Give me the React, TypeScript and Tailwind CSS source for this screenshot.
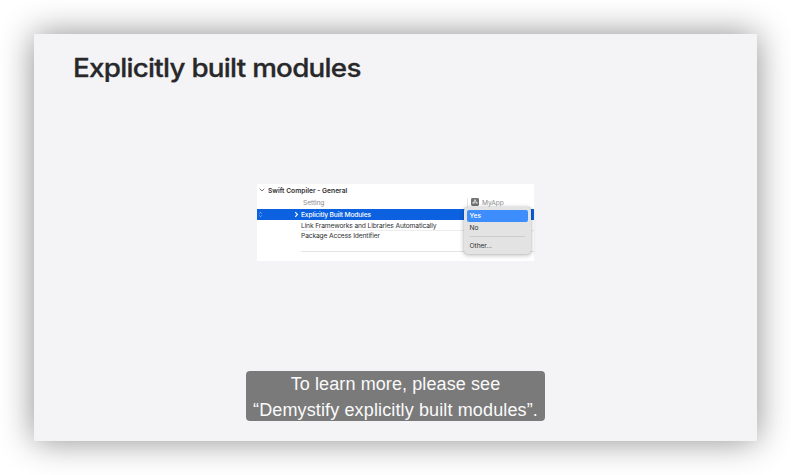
import React from "react";

function BuildSettings() {
  return (
    <div className="relative ml-[223px] mt-[91px] h-[77px] w-[277px] bg-white font-['Inter','Noto_Sans',sans-serif] text-[6.7px] leading-[11px] tracking-[-0.14px] text-[#303033]">
      <div className="flex h-[13px] items-center pl-[2px] font-semibold">
        <svg className="mb-[1px] mr-[3px] h-[6px] w-[6px]" viewBox="0 0 6 6" fill="none" stroke="#505053" strokeWidth=".8">
          <path d="M.7 1.7 3 4 5.3 1.7" />
        </svg>
        <span className="whitespace-nowrap pt-[1px] tracking-[0.01px]">Swift Compiler - General</span>
      </div>
      <div className="flex h-[12px] items-center text-[#8d8d90]">
        <span className="w-[164px] pl-[46px] leading-[10px] tracking-[-0.1px]">Setting</span>
        <span className="ml-[46px] flex h-[10px] items-center gap-[3px] border-l border-[#e4e4e4] pl-[3px] leading-[10px] tracking-[-0.08px]">
          <svg className="mb-[2px] h-[8px] w-[8px]" viewBox="0 0 8 8">
            <rect width="8" height="8" rx="1.4" fill="#737375" />
            <path d="M4.2 1.6 2.4 5M3.8 1.6 5.7 5M1.4 4.8h3M5.1 4.8h1.5M2 5.9l.3-.5M6.1 5.9l-.3-.5" stroke="#fff" strokeWidth=".75" fill="none" />
          </svg>
          <span>MyApp</span>
        </span>
      </div>
      <div className="flex h-[11px] items-center bg-[#0b61df] font-medium text-white">
        <svg className="ml-[1px] h-[7px] w-[5px]" viewBox="0 0 5 7" fill="none" stroke="#b9d6ff" strokeWidth=".7">
          <path d="m1.3 2.5 1.2-1.2 1.2 1.2M1.3 4.5l1.2 1.2 1.2-1.2" />
        </svg>
        <svg className="ml-[31px] mr-[2px] h-[7px] w-[5px]" viewBox="0 0 5 7" fill="none" stroke="white" strokeWidth="1.1">
          <path d="m1.2 1.1 2.3 2.4-2.3 2.4" />
        </svg>
        <span className="pt-[1px] tracking-[-0.17px]">Explicitly Built Modules</span>
      </div>
      <div className="ml-[44px] h-[11px] whitespace-nowrap border-b border-[#ededee] leading-[12px]">Link Frameworks and Libraries Automatically</div>
      <div className="ml-[44px] h-[21px] border-b border-[#e4e4e5] leading-[11px]">Package Access Identifier</div>
      <div className="absolute left-[207px] top-[23px] flex h-[47px] w-[67px] flex-col rounded-[4px] bg-[#e2e3e2] px-[3px] pt-[3px] shadow-[0_1px_5px_rgba(0,0,0,0.3),0_0_1px_rgba(0,0,0,0.25)]">
        <div className="h-[12px] rounded-[2px] bg-[#3d8dfd] pl-[2.5px] font-medium leading-[13px] tracking-normal text-white">Yes</div>
        <div className="h-[11px] pl-[2.5px] leading-[12px]">No</div>
        <div className="mx-[3px] h-[4px] border-b border-[#cbcccc]" />
        <div className="h-[16px] pl-[2.5px] leading-[18px] tracking-[-0.08px]">Other...</div>
      </div>
    </div>
  );
}

export default function App() {
  return (
    <main className="h-[475px] w-[791px] overflow-hidden bg-white p-[34px]">
      <section className="flex h-[407px] w-[723px] flex-col rounded-[1px] bg-[#f4f4f6] shadow-[0_0_34px_rgba(0,0,0,0.45)]">
        <h1 className="ml-[38.5px] mt-[17px] h-[42px] w-max origin-left scale-x-[1.09] whitespace-nowrap font-['Inter',sans-serif] text-[25.5px] font-medium leading-[34px] tracking-[-0.68px] text-[#28282a] [-webkit-text-stroke:0.3px_#28282a]">
          Explicitly built modules
        </h1>
        <BuildSettings />
        <div className="ml-[212px] mt-[110px] h-[50px] w-[299px] whitespace-nowrap rounded-[4px] bg-[#7a7a7a] text-center font-['Liberation_Sans',sans-serif] text-[18px] leading-[26px] text-[#fafafa]">
          <div className="h-[26px] tracking-[0.1px]">To learn more, please see</div>
          <div className="tracking-[0.13px]">“Demystify explicitly built modules”.</div>
        </div>
      </section>
    </main>
  );
}
